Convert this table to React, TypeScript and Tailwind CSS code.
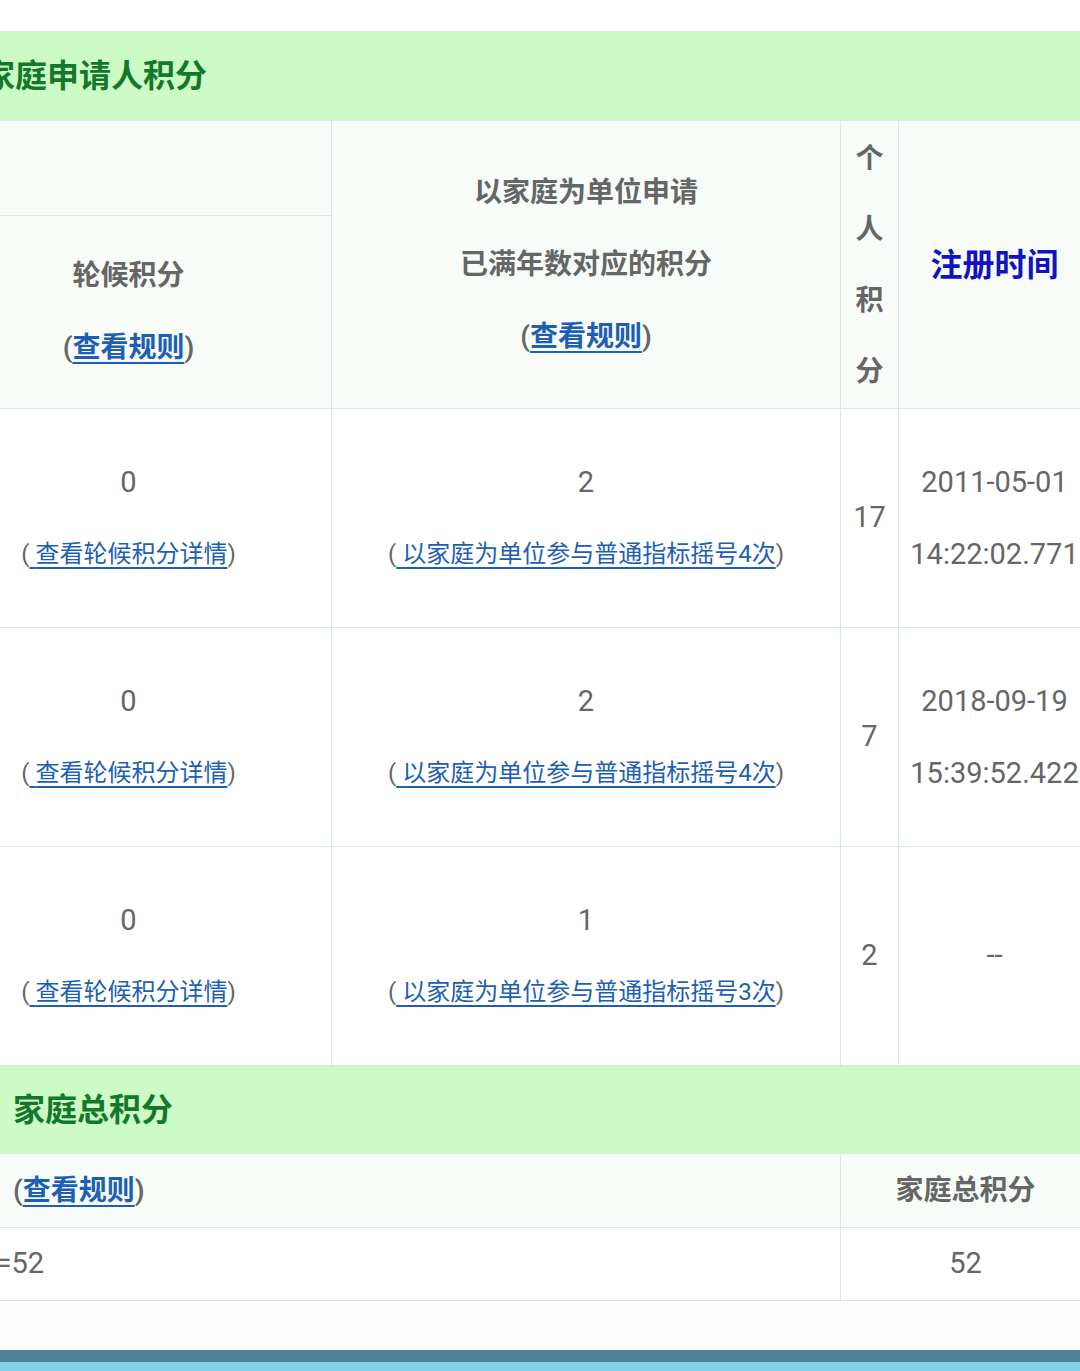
import React from 'react';

const cjk = "font-['Roboto','Noto_Sans_CJK_SC',sans-serif]";
const cell = 'border border-[#d6e9e2] text-center align-middle p-0';

function LinkLine({ text, bold }: { text: string; bold?: boolean }) {
  return (
    <div className={bold ? 'text-[28px] leading-[72px] font-semibold' : 'text-[24px] leading-[72px]'}>
      <span className="text-[#666]">(</span>
      <a href="#" className="text-[#1d5fb3] underline underline-offset-[5px]">
        {bold ? '' : '\u00a0'}
        {text}
      </a>
      <span className="text-[#666]">)</span>
    </div>
  );
}

function DataRow({ wait, years, times, personal, date, time }: {
  wait: string;
  years: string;
  times: string;
  personal: string;
  date?: string;
  time?: string;
}) {
  return (
    <tr className="bg-white h-[219px]">
      <td className={cell}>
        <div className="text-[29px] leading-[72px] text-[#666]">{wait}</div>
        <LinkLine text="查看轮候积分详情" />
      </td>
      <td className={cell}>
        <div className="text-[29px] leading-[72px] text-[#666]">{years}</div>
        <LinkLine text={`以家庭为单位参与普通指标摇号${times}次`} />
      </td>
      <td className={`${cell} text-[29px] text-[#666]`}>{personal}</td>
      <td className={`${cell} text-[29px] text-[#666] whitespace-nowrap`}>
        {date ? (
          <>
            <div className="leading-[72px]">{date}</div>
            <div className="leading-[72px]">{time}</div>
          </>
        ) : (
          <span>--</span>
        )}
      </td>
    </tr>
  );
}

export default function App() {
  return (
    <div className={`w-[1080px] h-[1371px] overflow-hidden bg-white flex flex-col ${cjk}`}>
      <div className="h-[31px] shrink-0" />
      <table className="ml-[-75px] w-[1165px] min-w-[1165px] border-collapse table-fixed shrink-0">
        <colgroup>
          <col className="w-[406px]" />
          <col className="w-[509px]" />
          <col className="w-[58px]" />
          <col className="w-[192px]" />
        </colgroup>
        <tbody>
          <tr className="h-[89px]">
            <td colSpan={4} className="border border-[#d6e9e2] bg-[#ccfbc5] pl-[57px] text-left text-[32px] font-bold text-[#13782b]">
              家庭申请人积分
            </td>
          </tr>
          <tr className="bg-[#f7fcf9] h-[95px]">
            <td className={cell} />
            <td rowSpan={2} className={cell}>
              <div className="text-[28px] leading-[72px] font-semibold text-[#666]">以家庭为单位申请</div>
              <div className="text-[28px] leading-[72px] font-semibold text-[#666]">已满年数对应的积分</div>
              <LinkLine text="查看规则" bold />
            </td>
            <td rowSpan={2} className={`${cell} text-[28px] leading-[71px] font-semibold text-[#666]`}>
              <div>个</div>
              <div>人</div>
              <div>积</div>
              <div>分</div>
            </td>
            <td rowSpan={2} className={`${cell} text-[32px] font-bold text-[#1212c4]`}>
              注册时间
            </td>
          </tr>
          <tr className="bg-[#f7fcf9] h-[193px]">
            <td className={cell}>
              <div className="text-[28px] leading-[72px] font-semibold text-[#666]">轮候积分</div>
              <LinkLine text="查看规则" bold />
            </td>
          </tr>
          <DataRow wait="0" years="2" times="4" personal="17" date="2011-05-01" time="14:22:02.771" />
          <DataRow wait="0" years="2" times="4" personal="7" date="2018-09-19" time="15:39:52.422" />
          <DataRow wait="0" years="1" times="3" personal="2" />
          <tr className="h-[88px]">
            <td colSpan={4} className="border border-[#d6e9e2] bg-[#ccfbc5] pl-[87px] text-left text-[32px] font-bold text-[#13782b]">
              家庭总积分
            </td>
          </tr>
          <tr className="bg-[#f8fcf9] h-[74px]">
            <td colSpan={2} className="border border-[#d6e9e2] pl-[87px] text-left text-[28px] font-semibold">
              <span className="text-[#666]">(</span>
              <a href="#" className="text-[#1d5fb3] underline underline-offset-[5px]">查看规则</a>
              <span className="text-[#666]">)</span>
            </td>
            <td colSpan={2} className={`${cell} text-[28px] font-semibold text-[#666]`}>家庭总积分</td>
          </tr>
          <tr className="bg-white h-[73px]">
            <td colSpan={2} className="border border-[#d6e9e2] p-0 text-left">
              <div className="w-[118px] flex justify-end">
                <span className="whitespace-nowrap text-[29px] text-[#666]">(17+7+2)×2=52</span>
              </div>
            </td>
            <td colSpan={2} className={`${cell} text-[29px] text-[#666]`}>52</td>
          </tr>
        </tbody>
      </table>
      <div className="h-[49px] shrink-0 bg-[#fdfefd]" />
      <div className="h-[12px] shrink-0 bg-[#4f8299]" />
      <div className="flex-1 bg-[#86cde9]" />
    </div>
  );
}
